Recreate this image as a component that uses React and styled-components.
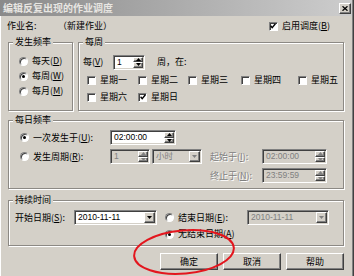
import React from 'react';
import styled, { createGlobalStyle, css } from 'styled-components';

const FONT = '"Noto Sans CJK SC", "Liberation Sans", sans-serif';
const NUMFONT = '"Liberation Sans", "Noto Sans CJK SC", sans-serif';

const GlobalStyle = createGlobalStyle`
  html, body { margin: 0; padding: 0; background: #d4d0c8; }
  body { font-family: ${FONT}; font-size: 9px; color: #000; }
  #root { width: 354px; height: 276px; }
`;

const sunken = css`
  box-sizing: border-box;
  border: 1px solid;
  border-color: #808080 #ffffff #ffffff #808080;
  box-shadow: inset 1px 1px 0 #404040, inset -1px -1px 0 #d4d0c8;
`;

const raised = css`
  box-sizing: border-box;
  background: #d4d0c8;
  border: 1px solid;
  border-color: #ffffff #404040 #404040 #ffffff;
  box-shadow: inset -1px -1px 0 #808080;
`;

const Window = styled.div`
  position: relative;
  width: 354px;
  height: 276px;
  box-sizing: border-box;
  background: #d4d0c8;
  overflow: hidden;
  display: flex;
  flex-direction: column;
  box-shadow: inset 1px 0 0 #ffffff, inset -1px 0 0 #404040, inset -2px 0 0 #808080;
`;

const TitleBar = styled.div`
  display: flex;
  align-items: center;
  justify-content: space-between;
  height: 16px;
  margin-right: 2px;
  padding: 0 1px 0 3px;
  background: linear-gradient(to right, #8a8a8a, #cdcdcd);
`;

const TitleText = styled.span`
  color: #e8e6e2;
  font-weight: 700;
  font-size: 10px;
  line-height: 16px;
  white-space: nowrap;
`;

const CloseButton = styled.span`
  ${raised}
  width: 12px;
  height: 11px;
  display: flex;
  align-items: center;
  justify-content: center;
`;

const Content = styled.div`
  display: flex;
  flex-direction: column;
  padding: 0 10px 0 8px;
`;

const HeaderRow = styled.div`
  display: flex;
  align-items: center;
  height: 12px;
  margin-top: 4px;
`;

const NameLabel = styled.span`
  width: 51px;
  margin-left: -1px;
  line-height: 12px;
  white-space: nowrap;
`;

const NameValue = styled.span`
  line-height: 12px;
  white-space: nowrap;
`;

const HeaderSpacer = styled.span`
  flex: 1 1 auto;
`;

const GroupRow = styled.div`
  display: flex;
  gap: 5px;
  margin-top: 4px;
`;

const Group = styled.fieldset`
  box-sizing: border-box;
  margin: ${p => p.$mt || 0}px 0 0 0;
  padding: 0;
  min-width: 0;
  width: ${p => (p.$w ? `${p.$w}px` : 'auto')};
  flex: ${p => (p.$w ? '0 0 auto' : '1 1 auto')};
  height: ${p => p.$h}px;
  border: 1px solid #8c8984;
  box-shadow: inset 1px 1px 0 #ffffff, 1px 1px 0 #ffffff;
`;

const Legend = styled.legend`
  margin-left: 4px;
  padding: 0 2px;
  line-height: 12px;
  font-size: 9px;
  background: #d4d0c8;
`;

const GroupBody = styled.div`
  display: flex;
  flex-direction: column;
  gap: ${p => p.$gap || 0}px;
  padding: ${p => p.$pt}px 0 0 ${p => p.$pl}px;
`;

const Line = styled.div`
  display: flex;
  align-items: center;
  height: ${p => p.$h || 15}px;
  margin-top: ${p => p.$mt || 0}px;
  padding-left: ${p => p.$pl || 0}px;
  gap: ${p => p.$gap || 0}px;
`;

const Text = styled.span`
  flex: 0 0 auto;
  width: ${p => (p.$w ? `${p.$w}px` : 'auto')};
  margin-left: ${p => p.$ml || 0}px;
  line-height: 12px;
  white-space: nowrap;
  color: ${p => (p.$disabled ? '#808080' : '#000')};
  text-shadow: ${p => (p.$disabled ? '1px 1px 0 #ffffff' : 'none')};
`;

const DaysGrid = styled.div`
  display: grid;
  grid-template-columns: 51px 50px 53px 57px auto;
  row-gap: 5px;
  margin-top: 5px;
  padding-left: 4px;
`;

const ChoiceLabel = styled.label`
  display: flex;
  align-items: center;
  gap: 4px;
  height: 12px;
  line-height: 12px;
  white-space: nowrap;
  flex: 0 0 auto;
  width: ${p => (p.$w ? `${p.$w}px` : 'auto')};
  margin-right: ${p => p.$mr || 0}px;
`;

const RadioMark = styled.span`
  position: relative;
  flex: 0 0 auto;
  box-sizing: border-box;
  width: 9px;
  height: 9px;
  border-radius: 50%;
  background: #ffffff;
  border: 1px solid;
  border-color: #808080 #ffffff #ffffff #808080;
  box-shadow: inset 1px 1px 0 #404040;
  &::after {
    content: '';
    display: ${p => (p.$on ? 'block' : 'none')};
    position: absolute;
    left: 2px;
    top: 2px;
    width: 3px;
    height: 3px;
    border-radius: 50%;
    background: #000;
  }
`;

const CheckMark = styled.span`
  flex: 0 0 auto;
  box-sizing: border-box;
  width: 9px;
  height: 9px;
  background: #ffffff;
  border: 1px solid;
  border-color: #808080 #ffffff #ffffff #808080;
  box-shadow: inset 1px 1px 0 #404040;
  display: flex;
  align-items: center;
  justify-content: center;
`;

const Field = styled.div`
  ${sunken}
  display: flex;
  align-items: stretch;
  flex: 0 0 auto;
  width: ${p => p.$w}px;
  height: 15px;
  padding: 1px;
  margin-left: ${p => p.$ml || 0}px;
  background: ${p => (p.$disabled ? '#d4d0c8' : '#ffffff')};
`;

const FieldValue = styled.span`
  flex: 1 1 auto;
  min-width: 0;
  padding-left: 2px;
  font-family: ${NUMFONT};
  font-size: 8.5px;
  line-height: 11px;
  white-space: nowrap;
  overflow: hidden;
  color: ${p => (p.$disabled ? '#808080' : '#000')};
`;

const Spinner = styled.span`
  display: flex;
  flex-direction: column;
  flex: 0 0 auto;
  width: 10px;
`;

const SpinButton = styled.span`
  ${raised}
  flex: 1 1 0;
  min-height: 0;
  display: flex;
  align-items: center;
  justify-content: center;
`;

const DropButton = styled.span`
  ${raised}
  flex: 0 0 auto;
  width: 11px;
  display: flex;
  align-items: center;
  justify-content: center;
`;

const ButtonRow = styled.div`
  display: flex;
  justify-content: flex-end;
  gap: 5px;
  margin-top: 7px;
`;

const PushButton = styled.button`
  ${raised}
  width: 58px;
  height: 17px;
  padding: 0;
  font-family: ${FONT};
  font-size: 9px;
  line-height: 15px;
  color: #000;
`;

const Annotation = styled.svg`
  position: absolute;
  left: 0;
  top: 0;
  pointer-events: none;
`;

const Arrow = ({ dir = 'down', color = '#000' }) => (
  <svg width="5" height="3" viewBox="0 0 5 3">
    <polygon points={dir === 'down' ? '0,0 5,0 2.5,3' : '0,3 5,3 2.5,0'} fill={color} />
  </svg>
);

const Radio = ({ label, on, w, mr }) => (
  <ChoiceLabel $w={w} $mr={mr}>
    <RadioMark $on={on} />
    <span>{label}</span>
  </ChoiceLabel>
);

const Check = ({ label, on, w, mr }) => (
  <ChoiceLabel $w={w} $mr={mr}>
    <CheckMark>
      {on && (
        <svg width="6" height="6" viewBox="0 0 6 6">
          <polyline points="0.6,2.8 2.2,4.6 5.4,0.8" fill="none" stroke="#000" strokeWidth="1.4" />
        </svg>
      )}
    </CheckMark>
    <span>{label}</span>
  </ChoiceLabel>
);

const SpinField = ({ value, w, disabled, ml }) => {
  const c = disabled ? '#808080' : '#000';
  return (
    <Field $w={w} $disabled={disabled} $ml={ml}>
      <FieldValue $disabled={disabled}>{value}</FieldValue>
      <Spinner>
        <SpinButton><Arrow dir="up" color={c} /></SpinButton>
        <SpinButton><Arrow dir="down" color={c} /></SpinButton>
      </Spinner>
    </Field>
  );
};

const ComboField = ({ value, w, disabled, ml }) => (
  <Field $w={w} $disabled={disabled} $ml={ml}>
    <FieldValue $disabled={disabled}>{value}</FieldValue>
    <DropButton><Arrow dir="down" color={disabled ? '#808080' : '#000'} /></DropButton>
  </Field>
);

const K = ({ children }) => <u>{children}</u>;

const days = [
  ['星期一', false], ['星期二', false], ['星期三', false], ['星期四', false], ['星期五', false],
  ['星期六', false], ['星期日', true],
];

export default function App() {
  return (
    <>
      <GlobalStyle />
      <Window>
        <TitleBar>
          <TitleText>编辑反复出现的作业调度</TitleText>
          <CloseButton>
            <svg width="6" height="5" viewBox="0 0 6 5">
              <path d="M0.5 0.3 L5.5 4.7 M5.5 0.3 L0.5 4.7" stroke="#000" strokeWidth="1.3" />
            </svg>
          </CloseButton>
        </TitleBar>

        <Content>
          <HeaderRow>
            <NameLabel>作业名:</NameLabel>
            <NameValue>（新建作业）</NameValue>
            <HeaderSpacer />
            <Check label={<>启用调度(<K>B</K>)</>} on mr={14} />
          </HeaderRow>

          <GroupRow>
            <Group $w={65} $h={75}>
              <Legend>发生频率</Legend>
              <GroupBody $pt={7} $pl={10} $gap={3}>
                <Radio label={<>每天(<K>D</K>)</>} />
                <Radio label={<>每周(<K>W</K>)</>} on />
                <Radio label={<>每月(<K>M</K>)</>} />
              </GroupBody>
            </Group>
            <Group $h={75}>
              <Legend>每周</Legend>
              <GroupBody $pt={7} $pl={4}>
                <Line $h={14}>
                  <Text $w={30}>每(<K>V</K>)</Text>
                  <SpinField value="1" w={32} />
                  <Text $ml={12}>周，在:</Text>
                </Line>
                <DaysGrid>
                  {days.map(([d, on]) => (
                    <Check key={d} label={d} on={on} />
                  ))}
                </DaysGrid>
              </GroupBody>
            </Group>
          </GroupRow>

          <Group $h={75} $mt={3}>
            <Legend>每日频率</Legend>
            <GroupBody $pt={4} $pl={11} $gap={4}>
              <Line>
                <Radio label={<>一次发生于(<K>U</K>):</>} on w={90} />
                <SpinField value="02:00:00" w={66} />
              </Line>
              <Line>
                <Radio label={<>发生周期(<K>R</K>):</>} w={90} />
                <SpinField value="1" w={40} disabled />
                <ComboField value="小时" w={50} disabled ml={2} />
                <Text $w={52} $ml={8} $disabled>起始于(<K>I</K>):</Text>
                <SpinField value="02:00:00" w={65} disabled />
              </Line>
              <Line $pl={190}>
                <Text $w={52} $disabled>终止于(<K>N</K>):</Text>
                <SpinField value="23:59:59" w={65} disabled />
              </Line>
            </GroupBody>
          </Group>

          <Group $h={52} $mt={5}>
            <Legend>持续时间</Legend>
            <GroupBody $pt={4} $pl={6}>
              <Line>
                <Text $w={59}>开始日期(<K>S</K>):</Text>
                <ComboField value="2010-11-11" w={83} />
                <ChoiceSpacer />
                <Radio label={<>结束日期(<K>E</K>):</>} w={82} />
                <ComboField value="2010-11-11" w={82} disabled />
              </Line>
              <Line $h={12} $mt={3} $pl={150}>
                <Radio label={<>无结束日期(<K>A</K>)</>} on />
              </Line>
            </GroupBody>
          </Group>

          <ButtonRow>
            <PushButton>确定</PushButton>
            <PushButton>取消</PushButton>
            <PushButton>帮助</PushButton>
          </ButtonRow>
        </Content>

        <Annotation width="354" height="276" viewBox="0 0 354 276">
          <ellipse
            cx="184"
            cy="252"
            rx="50"
            ry="21.5"
            transform="rotate(-5 184 252)"
            fill="none"
            stroke="#e3161e"
            strokeWidth="2"
          />
        </Annotation>
      </Window>
    </>
  );
}

const ChoiceSpacer = styled.span`
  flex: 0 0 auto;
  width: 8px;
`;
